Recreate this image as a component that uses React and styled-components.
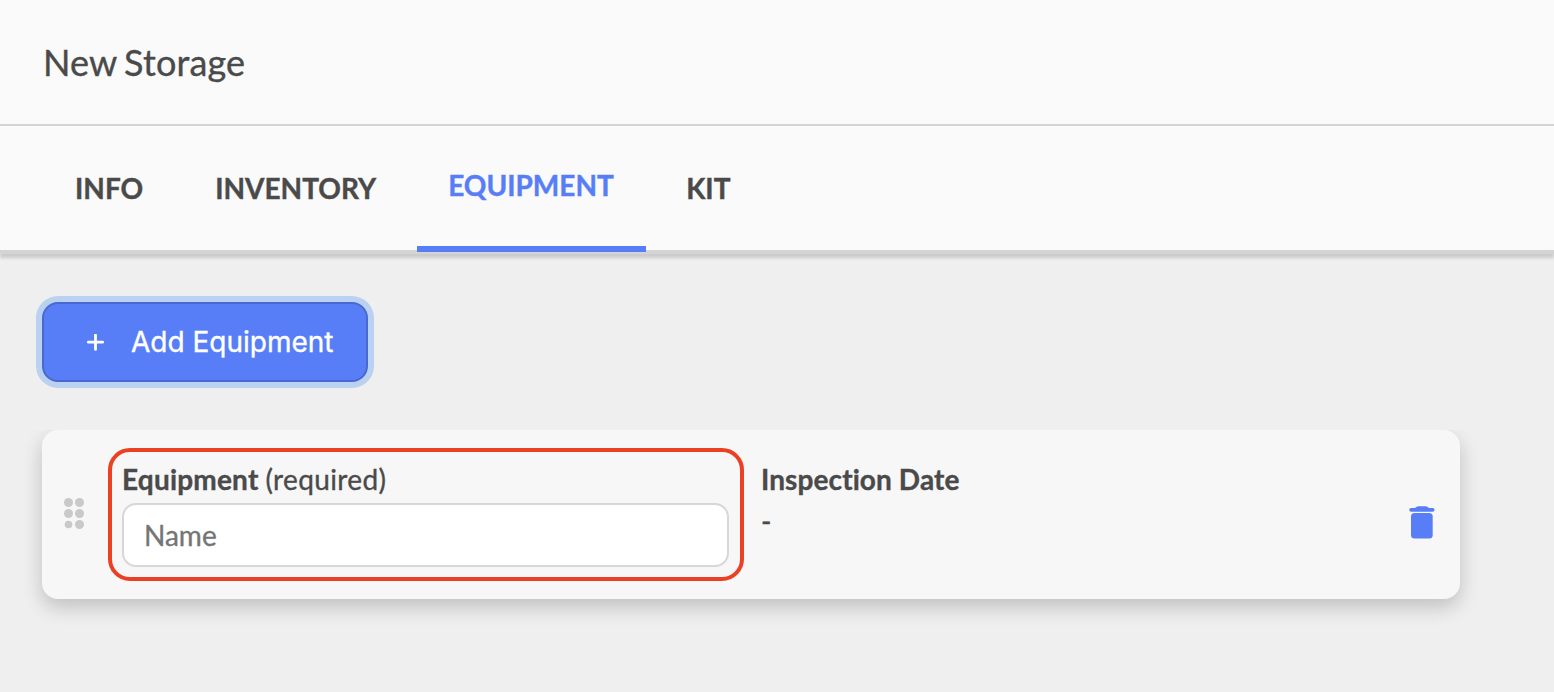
import React, { useState } from "react";
import styled, { createGlobalStyle } from "styled-components";

const GlobalStyle = createGlobalStyle`
    * { box-sizing: border-box; }
    body {
        margin: 0;
        background: #efefef;
        color: #4a4a4a;
        font-family: Lato, sans-serif;
        font-size: 28px;
        font-variant-ligatures: none;
        -webkit-text-stroke: 0.35px currentColor;
    }
`;

const Page = styled.div`
    min-height: 692px;
`;

const Header = styled.header`
    display: flex;
    align-items: center;
    height: 126px;
    padding: 0 43px;
    background: #fafafa;
    border-bottom: 2px solid #d4d4d4;
`;

const Title = styled.h1`
    margin: 0;
    font-size: 36px;
    font-weight: 400;
    line-height: 44px;
    letter-spacing: 0.15px;
    word-spacing: -2px;
`;

const Tabs = styled.nav`
    display: flex;
    gap: 8px;
    height: 128px;
    padding-left: 44px;
    background: #fafafa;
    border-bottom: 4px solid #d4d4d4;
    box-shadow: 0 4px 3px rgba(0, 0, 0, 0.15);
`;

const Tab = styled.button`
    height: 126px;
    padding: 0 33px 2px 31px;
    border: 0;
    border-bottom: ${props => props.$active ? '6px solid #587ef7' : '0'};
    background: none;
    color: ${props => props.$active ? '#587ef7' : '#4a4a4a'};
    font: 700 28px Lato, sans-serif;
    text-transform: uppercase;
    -webkit-text-stroke: 0.4px currentColor;

    &:nth-child(3) { width: 229px; }
    &:last-child { padding-left: 32px; }
`;

const Content = styled.main`
    padding: 48px 0 0 42px;
`;

const AddButton = styled.button`
    display: flex;
    align-items: center;
    width: 326px;
    height: 80px;
    padding: 0 0 0 43px;
    border: 2px solid #4a69d0;
    border-radius: 16px;
    background: #587ef7;
    box-shadow: 0 0 0 6px #bad1f2;
    color: #fff;
    font: 400 28px Inter, sans-serif;
    white-space: nowrap;
    -webkit-text-stroke: 0.35px currentColor;
`;

const PlusIcon = styled.svg`
    width: 17px;
    height: 17px;
    margin-right: 27px;
`;

// keeps the row shadow from showing above the list
const List = styled.div`
    margin-top: 48px;
    clip-path: inset(0 0 -60px -42px);
`;

const Row = styled.div`
    display: flex;
    width: 1418px;
    height: 169px;
    border-radius: 16px;
    background: #f7f7f7;
    box-shadow: 0 8px 20px rgba(0, 0, 0, 0.2);
`;

const DragHandle = styled.div`
    display: grid;
    grid-template-columns: 9px 9px;
    gap: 2px;
    align-content: center;
    width: 66px;
    padding: 0 0 2px 22px;
`;

const Dot = styled.span`
    width: 9px;
    height: 9px;
    border-radius: 50%;
    background: #c9c9c9;

    &:nth-child(5) { transform: scale(0.85); }
`;

const Field = styled.div`
    width: 636px;
    height: 133px;
    margin-top: 18px;
    padding: 10px 10px 0;
    border: 4px solid #ec4025;
    border-radius: 22px;
`;

const Label = styled.div`
    height: 34px;
    line-height: 34px;
    font-weight: 700;
    letter-spacing: ${props => props.$spacing || 'normal'};

    span {
        font-weight: 400;
        letter-spacing: 0.35px;
    }
`;

const Input = styled.input`
    display: block;
    width: 607px;
    height: 64px;
    margin-top: 7px;
    padding: 0 20px;
    border: 2px solid #d7d7d7;
    border-radius: 14px;
    outline: 0;
    background: #fff;
    color: #4a4a4a;
    font: 400 28px Lato, sans-serif;
    -webkit-text-stroke: 0.35px currentColor;

    &::placeholder { color: #757575; }
`;

const DateField = styled.div`
    flex: 1;
    padding: 32px 0 0 17px;
`;

const DateValue = styled.div`
    margin-top: 8px;
    line-height: 34px;
`;

const DeleteButton = styled.button`
    width: 26px;
    height: 34px;
    margin: 76px 25px 0 0;
    padding: 0;
    border: 0;
    background: none;
    color: #587ef7;

    svg { display: block; }
`;

const tabs = ['Info', 'Inventory', 'Equipment', 'Kit'];

function Plus() {
    return (
        <PlusIcon viewBox="0 0 17 17" fill="none" stroke="#fff" strokeWidth="2.8" strokeLinecap="round">
            <path d="M8.5 1v14.4M1.3 8.200h14.4" />
        </PlusIcon>
    )
}

function Trash() {
    return (
        <svg width="26" height="34" viewBox="0 0 26 34" fill="currentColor">
            <path d="M7.400 1Q8.200.2 9.500.2h7q1.300 0 2.100.8.800.900 2 .9H23.600a1.900 1.900 0 0 1 0 3.900H2.200a1.900 1.900 0 0 1 0-3.900h3.200q1.200 0 2-.9z" />
            <rect x="2" y="7" width="21.700" height="25.600" rx="3.500" />
        </svg>
    )
}

function EquipmentRow() {
    let [name, setName] = useState('');

    return (
        <Row>
            <DragHandle>
                {[0, 1, 2, 3, 4, 5].map(i => <Dot key={i} />)}
            </DragHandle>
            <Field>
                <Label $spacing="0.2px">Equipment <span>(required)</span></Label>
                <Input placeholder="Name" value={name} onChange={(e) => { setName(e.target.value) }} />
            </Field>
            <DateField>
                <Label $spacing="0.1px">Inspection Date</Label>
                <DateValue>-</DateValue>
            </DateField>
            <DeleteButton aria-label="Delete"><Trash /></DeleteButton>
        </Row>
    )
}

function App() {
    let [active, setActive] = useState('Equipment');

    return (
        <Page>
            <GlobalStyle />
            <Header>
                <Title>New Storage</Title>
            </Header>
            <Tabs>
                {tabs.map(tab => (
                    <Tab key={tab} $active={tab === active} onClick={() => { setActive(tab) }}>{tab}</Tab>
                ))}
            </Tabs>
            <Content>
                <AddButton><Plus />Add Equipment</AddButton>
                <List>
                    <EquipmentRow />
                </List>
            </Content>
        </Page>
    )
}

export default App;
